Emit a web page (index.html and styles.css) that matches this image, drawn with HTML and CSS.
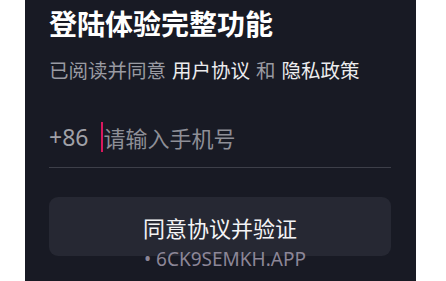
FILE: index.html
```html
<!DOCTYPE html>
<html lang="zh-CN">
<head>
  <meta charset="UTF-8"/>
  <meta name="viewport" content="width=device-width, initial-scale=1.0"/>
  <title>登陆</title>
  <link rel="stylesheet" href="styles.css">
</head>
<body>

<div class="panel">
  <h1 class="title">登陆体验完整功能</h1>
  <p class="agree">已阅读并同意<a href="#">用户协议</a><span class="and">和</span><a href="#">隐私政策</a></p>

  <div class="phone-row">
    <span class="prefix">+86</span>
    <span class="caret"></span>
    <span class="placeholder">请输入手机号</span>
  </div>

  <button class="submit">同意协议并验证</button>

  <div class="watermark">• 6CK9SEMKH.APP</div>
</div>

</body>
</html>
```

FILE: styles.css
```css
body {
  margin: 0;
  padding: 0;
  background-color: #ffffff;
  font-family: "Noto Sans", "Noto Sans CJK SC", sans-serif;
}

.panel {
  position: relative;
  margin-left: 25px;
  width: 391px;
  height: 281px;
  box-sizing: border-box;
  padding: 0 25px 0 24px;
  background-color: #181a24;
  overflow: hidden;
}

.title {
  margin: 9px 0 0 0;
  font-family: "Noto Sans CJK SC", sans-serif;
  font-size: 28px;
  line-height: 28px;
  font-weight: 700;
  color: #ffffff;
}

.agree {
  margin: 23px 0 0 0;
  font-family: "Noto Sans CJK SC", sans-serif;
  font-size: 19.5px;
  line-height: 19px;
  color: #9a9ba2;
}

.agree a {
  color: #ececee;
  text-decoration: none;
  margin: 0 6px;
}

.phone-row {
  display: flex;
  align-items: center;
  height: 40px;
  margin-top: 38px;
  border-bottom: 1px solid #3d3f49;
  padding-bottom: 10px;
}

.prefix {
  font-size: 23px;
  color: #a0a1a8;
}

.caret {
  width: 2px;
  height: 30px;
  margin-left: 13px;
  background-color: #d8185e;
}

.placeholder {
  font-family: "Noto Sans CJK SC", sans-serif;
  font-size: 22px;
  color: #8e8f97;
}

.submit {
  display: block;
  width: 100%;
  height: 59px;
  margin-top: 29px;
  border: none;
  border-radius: 9px;
  background-color: #262833;
  color: #f4f4f6;
  font-family: "Noto Sans CJK SC", sans-serif;
  font-size: 22px;
}

.watermark {
  position: absolute;
  left: 119px;
  top: 246px;
  font-size: 19px;
  color: #8c8697;
}
```
